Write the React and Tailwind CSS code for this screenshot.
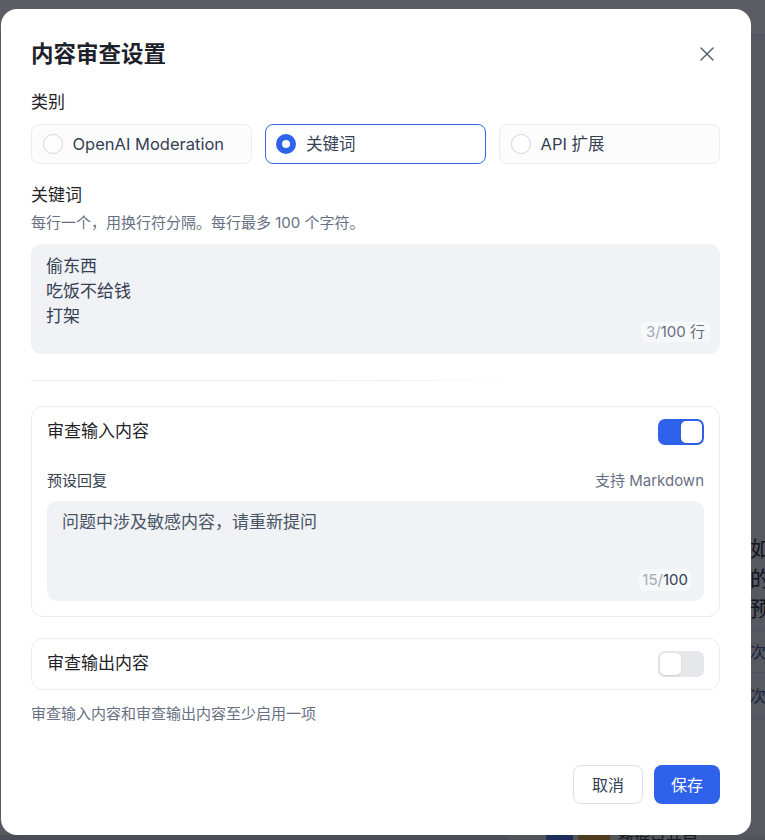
import React, { useState } from "react";
import { X } from "lucide-react";

const font = "font-['Inter','Noto_Sans_CJK_SC',sans-serif]";

const RadioCard = ({ label, checked, onClick }) => (
    <button
        type="button"
        onClick={onClick}
        className={
            checked
                ? "flex h-[40px] items-center gap-[10px] rounded-[8px] border-[1.5px] border-[#3366e6] bg-white pl-[10px] text-left"
                : "flex h-[40px] items-center gap-[10px] rounded-[8px] border border-[#eaecf0] bg-[#fcfcfd] pl-[10.5px] text-left"
        }
    >
        {checked ? (
            <span className="h-[20px] w-[20px] shrink-0 rounded-full border-[6px] border-[#2f62ea] bg-white" />
        ) : (
            <span className="h-[20px] w-[20px] shrink-0 rounded-full border border-[#d0d5dd] bg-white" />
        )}
        <span className="text-[16.5px] text-[#354052]">{label}</span>
    </button>
);

const Toggle = ({ on, onClick }) => (
    <button
        type="button"
        onClick={onClick}
        className={
            on
                ? "flex h-[26px] w-[46px] items-center justify-end rounded-[7px] bg-[#2f62ea] p-[2px]"
                : "flex h-[26px] w-[46px] items-center justify-start rounded-[7px] bg-[#e5e7eb] p-[2px]"
        }
    >
        <span className="h-[22px] w-[21px] rounded-[5px] bg-white shadow-[0_1px_2px_rgba(16,24,40,0.12)]" />
    </button>
);

const App = () => {
    const [category, setCategory] = useState("keywords");
    const [keywords, setKeywords] = useState("偷东西\n吃饭不给钱\n打架");
    const [reply, setReply] = useState("问题中涉及敏感内容，请重新提问");
    const [inputOn, setInputOn] = useState(true);
    const [outputOn, setOutputOn] = useState(false);

    const lines = keywords.split("\n").filter(l => l.trim() !== "").length;

    return (
        <div className={`relative h-[840px] w-[765px] overflow-hidden bg-white ${font}`}>
            {/* page behind the dialog */}
            <div className="flex h-full flex-col">
                <div className="h-[35px] shrink-0 border-b border-[#e5e7eb] bg-white" />
                <div className="flex flex-1 overflow-hidden bg-[#f2f3f5]">
                    <div className="w-[750px] shrink-0" />
                    <div className="min-w-0 flex-1 overflow-hidden whitespace-nowrap pt-[499px]">
                        <div className="pb-[6px] text-[21px] leading-[30px] text-[#1f2329]">
                            <div>如何设置</div>
                            <div>的回复</div>
                            <div>预设回复</div>
                        </div>
                        <div className="flex h-[42px] items-center border-t border-[#d5d8de] text-[16px] text-[#3b4a8c]">次数限制</div>
                        <div className="flex h-[46px] items-center border-t border-[#d5d8de] text-[16px] text-[#3b4a8c]">次数统计</div>
                        <div className="border-t border-[#d5d8de]" />
                    </div>
                </div>
                <div className="flex h-[5px] shrink-0 items-start overflow-hidden whitespace-nowrap bg-[#e2e3e7]">
                    <div className="h-[5px] w-[508px] shrink-0 bg-[#cfd1d6]" />
                    <div className="ml-[38px] h-[5px] w-[27px] shrink-0 bg-[#3b6be0]" />
                    <div className="ml-[5px] h-[5px] w-[32px] shrink-0 bg-[#d89a2a]" />
                    <div className="ml-[8px] text-[16px] leading-[10px] text-[#333]">数据已开启</div>
                </div>
            </div>

            {/* overlay */}
            <div className="absolute inset-0 bg-[rgba(14,16,26,0.68)]">
                <div className="ml-[1px] mt-[9px] flex h-[826px] w-[750px] flex-col rounded-[16px] bg-white px-[30px] pt-[30px]">
                    <div className="flex h-[30px] items-center justify-between">
                        <h1 className="text-[22.5px] font-bold leading-[30px] text-[#1d2129]">内容审查设置</h1>
                        <button type="button" className="mr-[2px] text-[#5b6372]">
                            <X size={24} strokeWidth={1.5} />
                        </button>
                    </div>

                    <div className="mt-[21px] text-[17px] leading-[24px] text-[#1f2329]">类别</div>
                    <div className="mt-[10px] grid grid-cols-3 gap-[13px] pr-[1px]">
                        <RadioCard label="OpenAI Moderation" checked={category === "openai"} onClick={() => setCategory("openai")} />
                        <RadioCard label="关键词" checked={category === "keywords"} onClick={() => setCategory("keywords")} />
                        <RadioCard label="API 扩展" checked={category === "api"} onClick={() => setCategory("api")} />
                    </div>

                    <div className="mt-[19px] text-[17px] leading-[24px] text-[#1f2329]">关键词</div>
                    <div className="mt-[6px] text-[15px] leading-[20px] text-[#676f83]">每行一个，用换行符分隔。每行最多 100 个字符。</div>
                    <div className="relative mt-[11px] mr-[1px]">
                        <textarea
                            value={keywords}
                            onChange={e => setKeywords(e.target.value)}
                            className="block h-[110px] w-full resize-none rounded-[10px] bg-[#f0f2f5] px-[15px] pt-[10px] text-[17px] leading-[25px] text-[#354052] outline-none"
                        />
                        <div className="absolute bottom-[12px] right-[10px] rounded-[5px] bg-[#f7f8fa] px-[5px] text-[15px] leading-[20px] text-[#676f83]">
                            <span className="text-[#a3a9b6]">{lines}/</span>100 行
                        </div>
                    </div>

                    <div className="mt-[26px] h-px w-[500px] bg-gradient-to-r from-[#e8eaee] via-[#eef0f3] via-70% to-transparent" />

                    <div className="mt-[25px] mr-[1px] rounded-[12px] border border-[#eaecf0] px-[15px] pb-[15px] pt-[12px]">
                        <div className="flex h-[26px] items-center justify-between">
                            <span className="text-[17px] text-[#1f2329]">审查输入内容</span>
                            <Toggle on={inputOn} onClick={() => setInputOn(!inputOn)} />
                        </div>
                        <div className="mt-[26px] flex h-[20px] items-center justify-between text-[15px]">
                            <span className="text-[#354052]">预设回复</span>
                            <span className="text-[#676f83]">支持 Markdown</span>
                        </div>
                        <div className="relative mt-[10px]">
                            <textarea
                                value={reply}
                                onChange={e => setReply(e.target.value)}
                                className="block h-[100px] w-full resize-none rounded-[10px] bg-[#f0f2f5] px-[15px] pt-[9px] text-[17px] leading-[25px] text-[#495464] outline-none"
                            />
                            <div className="absolute bottom-[10px] right-[13px] rounded-[5px] bg-[#f7f8fa] px-[3px] text-[15px] leading-[22px] text-[#354052]">
                                <span className="text-[#a3a9b6]">{reply.length}/</span>100
                            </div>
                        </div>
                    </div>

                    <div className="mt-[21px] mr-[1px] flex h-[52px] items-center justify-between rounded-[12px] border border-[#eaecf0] px-[15px]">
                        <span className="text-[17px] text-[#1f2329]">审查输出内容</span>
                        <Toggle on={outputOn} onClick={() => setOutputOn(!outputOn)} />
                    </div>

                    <div className="mt-[14px] text-[15px] leading-[20px] text-[#676f83]">审查输入内容和审查输出内容至少启用一项</div>

                    <div className="mt-auto flex justify-end gap-[11px] pb-[31px] pr-[1px]">
                        <button type="button" className="h-[39px] w-[70px] rounded-[8px] border border-[#dcdfe4] bg-white text-[16px] text-[#354052]">取消</button>
                        <button type="button" className="h-[39px] w-[66px] rounded-[8px] bg-[#2f62ea] text-[16px] text-white">保存</button>
                    </div>
                </div>
            </div>
        </div>
    );
};

export default App;
